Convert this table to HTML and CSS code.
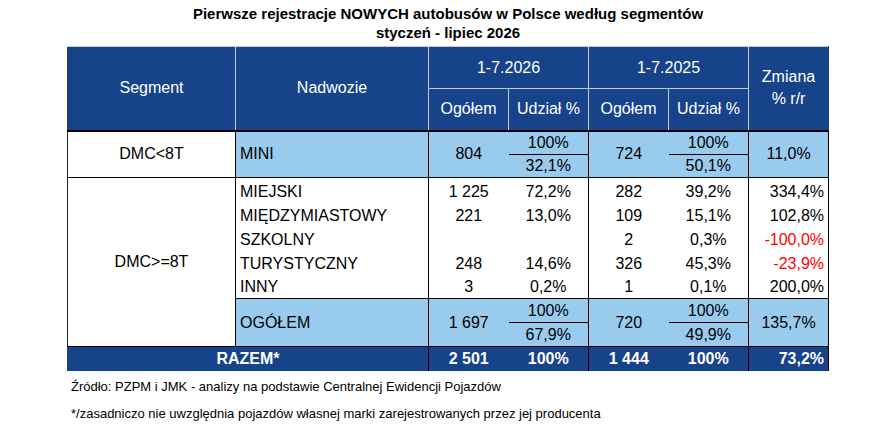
FILE: index.html
```html
<!DOCTYPE html>
<html lang="pl">
<head>
<meta charset="utf-8">
<title>Pierwsze rejestracje NOWYCH autobusów</title>
<link rel="stylesheet" href="styles.css">
</head>
<body>
<div class="wrap">
  <h1 class="title">Pierwsze rejestracje NOWYCH autobusów w Polsce według segmentów<br>styczeń - lipiec 2026</h1>
  <table class="tbl">
    <colgroup>
      <col class="c-seg"><col class="c-nad"><col class="c-num"><col class="c-num"><col class="c-num"><col class="c-num"><col class="c-num">
    </colgroup>
    <thead>
      <tr class="h1">
        <th rowspan="2" class="first">Segment</th>
        <th rowspan="2">Nadwozie</th>
        <th colspan="2">1-7.2026</th>
        <th colspan="2">1-7.2025</th>
        <th rowspan="2" class="last">Zmiana<br>% r/r</th>
      </tr>
      <tr class="h2">
        <th>Ogółem</th><th>Udział %</th><th>Ogółem</th><th>Udział %</th>
      </tr>
    </thead>
    <tbody>
      <tr class="sub mini-a">
        <td rowspan="2" class="seg">DMC&lt;8T</td>
        <td rowspan="2" class="nad lb">MINI</td>
        <td rowspan="2" class="lb gl">804</td>
        <td class="lb split">100%</td>
        <td rowspan="2" class="lb gl">724</td>
        <td class="lb split">100%</td>
        <td rowspan="2" class="lb gl gr">11,0%</td>
      </tr>
      <tr class="sub mini-b">
        <td class="lb">32,1%</td>
        <td class="lb">50,1%</td>
      </tr>
      <tr class="det first-det">
        <td rowspan="7" class="seg seg-big">DMC&gt;=8T</td>
        <td class="nad">MIEJSKI</td>
        <td class="gl">1 225</td><td>72,2%</td>
        <td class="gl">282</td><td>39,2%</td>
        <td class="gl gr zm">334,4%</td>
      </tr>
      <tr class="det">
        <td class="nad">MIĘDZYMIASTOWY</td>
        <td class="gl">221</td><td>13,0%</td>
        <td class="gl">109</td><td>15,1%</td>
        <td class="gl gr zm">102,8%</td>
      </tr>
      <tr class="det">
        <td class="nad">SZKOLNY</td>
        <td class="gl"></td><td></td>
        <td class="gl">2</td><td>0,3%</td>
        <td class="gl gr zm neg">-100,0%</td>
      </tr>
      <tr class="det">
        <td class="nad">TURYSTYCZNY</td>
        <td class="gl">248</td><td>14,6%</td>
        <td class="gl">326</td><td>45,3%</td>
        <td class="gl gr zm neg">-23,9%</td>
      </tr>
      <tr class="det last-det">
        <td class="nad">INNY</td>
        <td class="gl">3</td><td>0,2%</td>
        <td class="gl">1</td><td>0,1%</td>
        <td class="gl gr zm">200,0%</td>
      </tr>
      <tr class="sub tot-a">
        <td rowspan="2" class="nad lb">OGÓŁEM</td>
        <td rowspan="2" class="lb gl">1 697</td>
        <td class="lb split">100%</td>
        <td rowspan="2" class="lb gl">720</td>
        <td class="lb split">100%</td>
        <td rowspan="2" class="lb gl gr">135,7%</td>
      </tr>
      <tr class="sub tot-b">
        <td class="lb">67,9%</td>
        <td class="lb">49,9%</td>
      </tr>
      <tr class="razem">
        <td colspan="2" class="rz-label">RAZEM*</td>
        <td class="gl">2 501</td><td>100%</td>
        <td class="gl">1 444</td><td>100%</td>
        <td class="gl gr zm">73,2%</td>
      </tr>
    </tbody>
  </table>
  <div class="notes">
    <p class="note">Źródło: PZPM i JMK - analizy na podstawie Centralnej Ewidencji Pojazdów</p>
    <p class="note">*/zasadniczo nie uwzględnia pojazdów własnej marki zarejestrowanych przez jej producenta</p>
  </div>
</div>
</body>
</html>
```
FILE: styles.css
```css
html, body {
  margin: 0;
  padding: 0;
  background: #ffffff;
}
body {
  font-family: "Liberation Sans", Arial, sans-serif;
  color: #000000;
}
.wrap {
  width: 762px;
  margin-left: 67px;
  padding-top: 4px;
}
.title {
  margin: 0 0 4px 0;
  font-size: 15px;
  line-height: 19px;
  font-weight: bold;
  text-align: center;
}
.tbl {
  width: 762px;
  table-layout: fixed;
  border-collapse: collapse;
  font-size: 16px;
}
.c-seg { width: 168px; }
.c-nad { width: 193px; }
.c-num { width: 80px; }

.tbl th {
  background: #17438a;
  color: #ffffff;
  font-weight: normal;
  border: 1px solid #c3cbdb;
  padding: 0;
  line-height: 22px;
  text-align: center;
  vertical-align: middle;
}
.tbl th.first { border-left: 1px solid #3a3a3a; }
.tbl th.last { border-right: 1px solid #17438a; }
.h1 { height: 42px; }
.h2 { height: 42px; }

.tbl td {
  padding: 0;
  border: none;
  text-align: center;
  vertical-align: middle;
  line-height: 22px;
}
.tbl td.seg {
  background: #ffffff;
  border-left: 1px solid #222222;
  border-right: 1px solid #000000;
  border-top: 1px solid #000000;
}
.tbl td.nad {
  text-align: left;
  padding-left: 4px;
  border-right: 1px solid #000000;
}
.tbl td.lb { background: #98cbee; }
.tbl td.gl { border-left: 1px solid #000000; }
.tbl td.gr { border-right: 1px solid #000000; }
.tbl td.zm { text-align: right; padding-right: 4px; }
.tbl td.neg { color: #ff0000; }
.tbl td.split { border-bottom: 1px solid #000000; }

.mini-a td { border-top: 2px solid #000000; }
.tbl .mini-a td.seg { border-top: 2px solid #000000; }
.mini-a { height: 24px; }
.mini-b { height: 23px; }

.first-det td { border-top: 1px solid #000000; }
.det { height: 24px; }
.first-det { height: 26px; }
.first-det td { padding-top: 3px; }
.tbl .first-det td.seg-big { padding-top: 0; }
.last-det { height: 23px; }

.tot-a td { border-top: 1px solid #000000; }
.tot-a { height: 24px; }
.tot-b { height: 24px; }

.razem { height: 24px; }
.razem td {
  background: #17438a;
  color: #ffffff;
  font-weight: bold;
  border-top: 1px solid #000000;
}
.tbl .razem td.rz-label { border-left: 1px solid #17438a; }

.notes {
  margin-top: 2px;
  padding-left: 4px;
}
.note {
  margin: 0;
  font-size: 13px;
  line-height: 27px;
}
```
